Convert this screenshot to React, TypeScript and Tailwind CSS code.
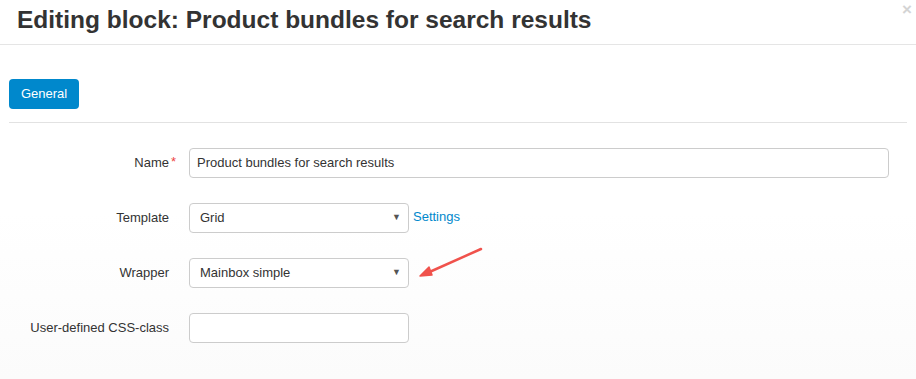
import React from 'react';

const font = { fontFamily: '"Liberation Sans", Arial, sans-serif' };

function Row({ label, required, children }: { label: string; required?: boolean; children: React.ReactNode }) {
    return (
        <div className="flex items-center h-[30px] mb-[25px]">
            <div className="w-[160px] shrink-0 text-right text-[13px] text-[#333] relative">
                {label}
                {required && <span className="absolute left-[162px] top-[-1px] text-[#ee4444]">*</span>}
            </div>
            <div className="ml-[20px] flex items-center">{children}</div>
        </div>
    );
}

function Select({ value }: { value: string }) {
    return (
        <div className="w-[220px] h-[30px] border border-[#cccccc] rounded-[4px] bg-white flex items-center justify-between pl-[10px] pr-[7px] text-[13px] text-[#333]">
            <span>{value}</span>
            <span className="text-[9px] text-[#555]">▼</span>
        </div>
    );
}

export default function App() {
    return (
        <div className="w-[916px] h-[379px] bg-white relative overflow-hidden" style={font}>
            <div className="h-[45px] border-b border-[#e5e5e5] flex items-center pl-[17px]">
                <h1 className="text-[24.5px] font-bold text-[#333] leading-none mt-[-3px]">
                    Editing block: Product bundles for search results
                </h1>
            </div>
            <span className="absolute left-[902px] top-[1px] text-[#d4d4d4] text-[17px] font-bold leading-none">×</span>

            <div className="bg-gradient-to-b from-white via-white to-[#fbfbfb] h-[334px] px-[9px]">
                <div className="pt-[34px] pb-[13px] border-b border-[#e2e2e2]">
                    <button className="w-[70px] h-[30px] bg-[#0088cc] rounded-[4px] text-white text-[13px]">
                        General
                    </button>
                </div>

                <div className="pt-[25px]">
                    <Row label="Name" required>
                        <div className="w-[700px] h-[30px] border border-[#cccccc] rounded-[4px] bg-white flex items-center px-[7px] text-[13px] text-[#333]">
                            Product bundles for search results
                        </div>
                    </Row>
                    <Row label="Template">
                        <Select value="Grid" />
                        <a className="ml-[4px] text-[13px] text-[#0088cc] mt-[-2px]">Settings</a>
                    </Row>
                    <Row label="Wrapper">
                        <Select value="Mainbox simple" />
                    </Row>
                    <Row label="User-defined CSS-class">
                        <div className="w-[220px] h-[30px] border border-[#cccccc] rounded-[4px] bg-white" />
                    </Row>
                </div>
            </div>

            <svg className="absolute left-[415px] top-[244px]" width="72" height="38" viewBox="0 0 72 38">
                <line x1="66" y1="5" x2="10" y2="30" stroke="#f0524c" strokeWidth="2.5" strokeLinecap="round" />
                <path d="M5 32 L14 23 L17 31 Z" fill="#f0524c" stroke="#f0524c" strokeWidth="1.5" strokeLinejoin="round" />
            </svg>
        </div>
    );
}
